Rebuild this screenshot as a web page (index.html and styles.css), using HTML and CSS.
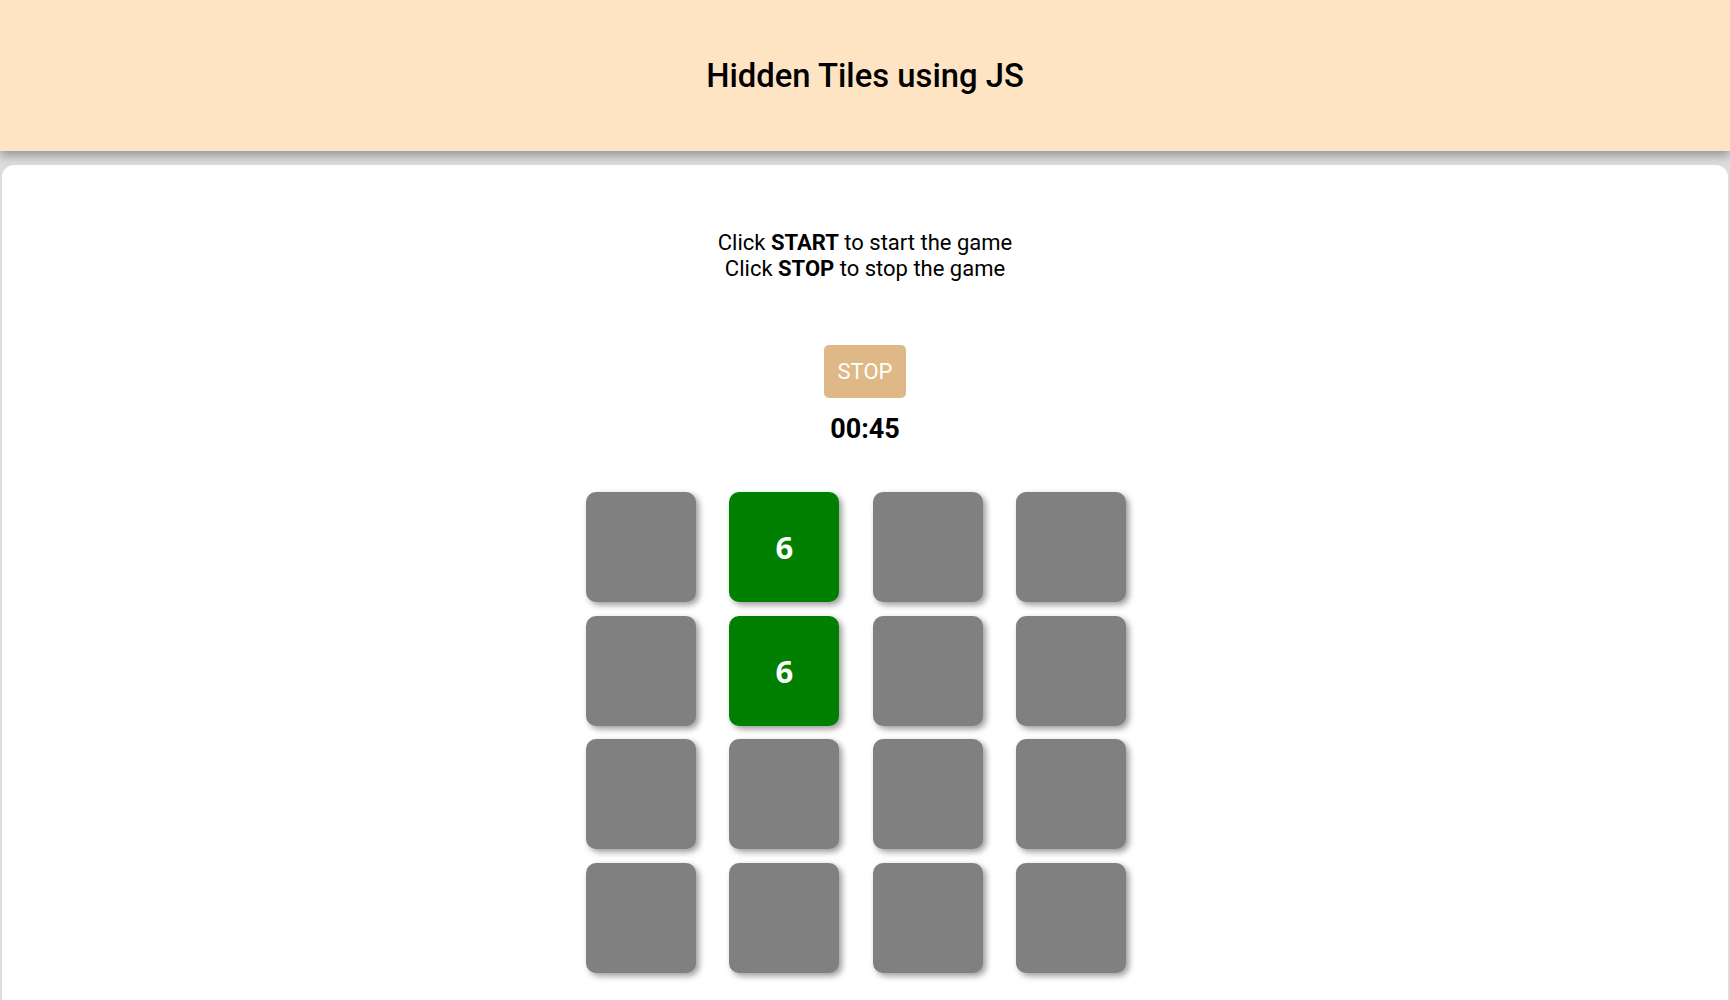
FILE: index.html
```html
<!DOCTYPE html>
<html lang="en">
<head>
<meta charset="utf-8">
<title>Hidden Tiles using JS</title>
<link rel="stylesheet" href="styles.css">
</head>
<body>
<header class="top">
  <h1 class="title">Hidden Tiles using JS</h1>
</header>
<main class="card">
  <p class="intro">Click <b>START</b> to start the game<br>Click <b>STOP</b> to stop the game</p>
  <button class="btn">STOP</button>
  <div class="timer">00:45</div>
  <div class="board">
    <div class="tile"></div>
    <div class="tile open">6</div>
    <div class="tile"></div>
    <div class="tile"></div>
    <div class="tile"></div>
    <div class="tile open">6</div>
    <div class="tile"></div>
    <div class="tile"></div>
    <div class="tile"></div>
    <div class="tile"></div>
    <div class="tile"></div>
    <div class="tile"></div>
    <div class="tile"></div>
    <div class="tile"></div>
    <div class="tile"></div>
    <div class="tile"></div>
  </div>
</main>
</body>
</html>
```
FILE: styles.css
```css
html, body {
  margin: 0;
  padding: 0;
}
body {
  background: #dcdcdc;
  font-family: Roboto, "Liberation Sans", sans-serif;
  color: #000;
  overflow: hidden;
}
.top {
  position: relative;
  z-index: 2;
  height: 151px;
  background: #ffe4c4;
  display: flex;
  align-items: center;
  justify-content: center;
  box-shadow: 0 4px 10px rgba(0, 0, 0, 0.35);
}
.title {
  margin: 0;
  font-size: 32.8px;
  font-weight: 500;
  line-height: 1;
  padding-top: 1px;
}
.card {
  margin: 14px 2px 0;
  background: #fff;
  border-radius: 12px;
  min-height: 900px;
  display: flex;
  flex-direction: column;
  align-items: center;
  padding-top: 65px;
}
.intro {
  margin: 0;
  font-size: 22px;
  line-height: 26px;
  text-align: center;
}
.intro b {
  font-weight: 700;
}
.btn {
  margin-top: 63px;
  background: #deb887;
  color: #fff;
  border: none;
  border-radius: 5px;
  font-family: Roboto, "Liberation Sans", sans-serif;
  font-size: 22px;
  line-height: 26px;
  padding: 13.5px 14px;
}
.timer {
  margin-top: 15px;
  font-size: 27px;
  font-weight: 700;
  line-height: 32px;
}
.board {
  margin-top: 47px;
  margin-right: 18px;
  display: grid;
  grid-template-columns: repeat(4, 110px);
  grid-auto-rows: 110px;
  column-gap: 33.3px;
  row-gap: 13.7px;
}
.tile {
  background: #808080;
  border-radius: 10px;
  box-shadow: 3px 3px 6px rgba(0, 0, 0, 0.4);
  display: flex;
  align-items: center;
  justify-content: center;
  color: #fff;
  font-family: "Open Sans", "DejaVu Sans", sans-serif;
  font-weight: 700;
  font-size: 31px;
}
.tile.open {
  background: #008000;
}
```
